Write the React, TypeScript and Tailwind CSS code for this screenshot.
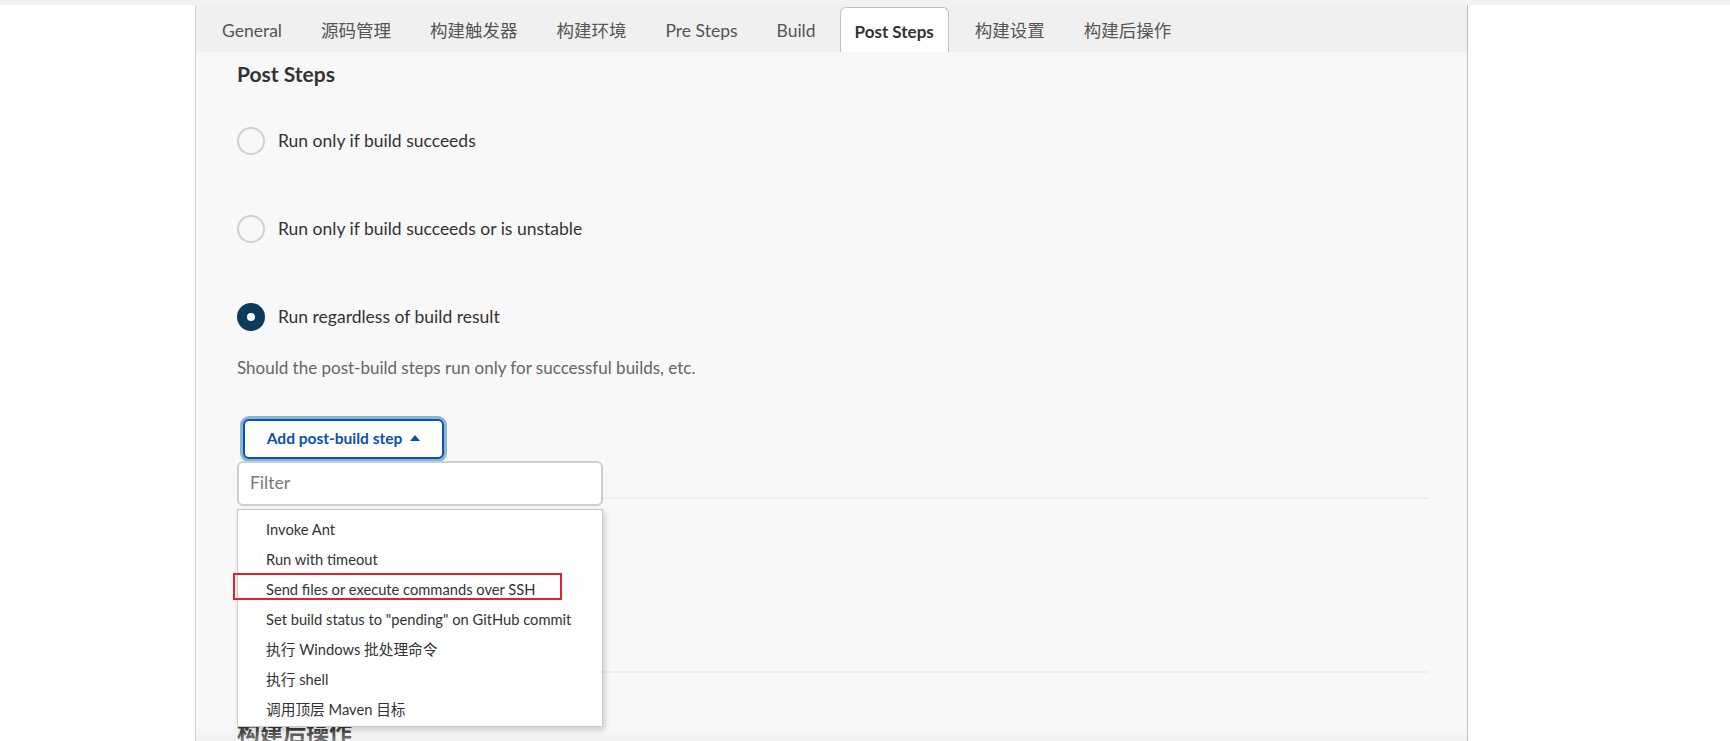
import { useState } from 'react'

const tabs = ['General', '源码管理', '构建触发器', '构建环境', 'Pre Steps', 'Build', 'Post Steps', '构建设置', '构建后操作']

const runOptions = [
  'Run only if build succeeds',
  'Run only if build succeeds or is unstable',
  'Run regardless of build result'
]

const steps = [
  'Invoke Ant',
  'Run with timeout',
  'Send files or execute commands over SSH',
  'Set build status to "pending" on GitHub commit',
  '执行 Windows 批处理命令',
  '执行 shell',
  '调用顶层 Maven 目标'
]

const font = "font-['Lato','Noto_Sans_CJK_SC',sans-serif]"

function Radio({ checked }: { checked: boolean }) {
  if (checked) {
    return (
      <span className="w-[28px] h-[28px] rounded-full bg-[#0e3a5b] flex items-center justify-center shrink-0">
        <span className="w-[8px] h-[8px] rounded-full bg-white" />
      </span>
    )
  }
  return <span className="w-[28px] h-[28px] rounded-full border-2 border-[#c9d3da] shrink-0" />
}

export default function App() {
  const [selected, setSelected] = useState(2)

  return (
    <div className={`h-[741px] overflow-hidden bg-white ${font}`}>
      <div className="h-[5px] bg-[#f2f2f2]" />
      <div className="flex">
        {/* sidebar area (empty) */}
        <div className="w-[195px] shrink-0" />

        <div className="relative w-[1273px] h-[736px] shrink-0 border-l border-[#d2d2d2] border-r border-r-[#b5c0c7] bg-[#f8f8f8] overflow-hidden">
          {/* Tab bar */}
          <div className="flex items-end gap-[9px] pl-[11px] h-[47px] bg-[#f0f0f0]">
            {tabs.map((t) =>
              t === 'Post Steps' ? (
                <div
                  key={t}
                  className="h-[45px] px-[14px] pt-[3px] mr-[2px] flex items-center bg-white border border-b-0 border-[#b9c2c8] rounded-t-[6px] text-[17px] font-bold text-[#333]"
                >
                  {t}
                </div>
              ) : (
                <div key={t} className="h-[45px] px-[15px] pt-[3px] flex items-center text-[17.5px] text-[#555]">
                  {t}
                </div>
              )
            )}
          </div>

          {/* Content */}
          <div className="pl-[41px] pr-[39px] pt-[7px]">
            <h2 className="text-[21px] leading-[30px] font-bold text-[#333]">Post Steps</h2>

            <div className="mt-[38px] flex flex-col gap-[60px]">
              {runOptions.map((o, i) => (
                <div key={o} className="flex items-center gap-[13px] h-[28px] cursor-pointer" onClick={() => setSelected(i)}>
                  <Radio checked={selected === i} />
                  <span className="text-[17.5px] text-[#333]">{o}</span>
                </div>
              ))}
            </div>

            <p className="mt-[25px] text-[17px] leading-[24px] text-[#666]">
              Should the post-build steps run only for successful builds, etc.
            </p>

            <div className="relative mt-[39px]">
              <button className="ml-[6px] h-[40px] w-[201px] flex items-center justify-center gap-[8px] rounded-[6px] border-2 border-[#0b50b4] bg-white text-[15.5px] font-bold text-[#0b4fb0] shadow-[0_0_0_3px_#89b4d3]">
                Add post-build step
                <svg width="10" height="6" viewBox="0 0 10 6" className="mt-[-2px]">
                  <path d="M0 6 L5 0 L10 6 Z" fill="#0b4fb0" />
                </svg>
              </button>

              {/* Dropdown overlay */}
              <div className="absolute left-0 top-[42px] z-10 w-[366px]">
                <div className="h-[45px] rounded-[6px] border-2 border-[#c8d0d6] bg-white flex items-center pl-[11px] text-[17.5px] text-[#7a7a7a]">
                  Filter
                </div>
                <div className="relative mt-[3px] h-[218px] border border-[#c7cbcf] bg-white pt-[4px] shadow-[2px_3px_6px_rgba(0,0,0,0.18)]">
                  {steps.map((s) => (
                    <div key={s} className="h-[30px] leading-[30px] pl-[28px] text-[14.7px] text-[#333]">
                      {s}
                    </div>
                  ))}
                  {/* annotation */}
                  <div className="absolute -left-[5px] top-[63px] w-[329px] h-[27px] border-2 border-[#e5202e]" />
                </div>
              </div>
            </div>

            <div className="mt-[38px] h-[2px] bg-[#eeeeee]" />
            <div className="h-[172px]" />
            <div className="h-[2px] bg-[#eeeeee]" />

            <h2 className="mt-[44px] text-[23px] leading-[30px] font-bold text-[#333]">构建后操作</h2>
          </div>

          {/* bottom fade */}
          <div className="absolute left-0 right-0 bottom-0 h-[14px] bg-gradient-to-b from-[#f8f8f8]/0 to-[#e8e8e8]/40" />
        </div>
      </div>
    </div>
  )
}
